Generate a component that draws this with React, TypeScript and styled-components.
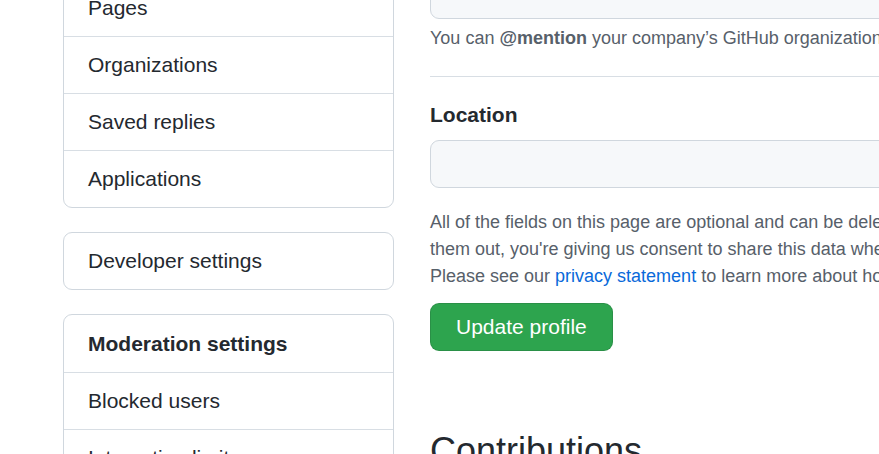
import React from "react";
import styled, { createGlobalStyle } from "styled-components";

const GlobalStyle = createGlobalStyle`
  html, body {
    margin: 0;
    padding: 0;
    background: #ffffff;
    overflow: hidden;
  }
  body {
    font-family: "Liberation Sans", Arial, Helvetica, sans-serif;
    color: #24292f;
  }
`;

const Layout = styled.div`
  display: flex;
  align-items: flex-start;
  gap: 36px;
  margin-top: -29px;
  padding-left: 63px;
  width: max-content;
`;

const Sidebar = styled.nav`
  width: 331px;
  flex-shrink: 0;
  display: flex;
  flex-direction: column;
  gap: 24px;
  padding-top: 8px;
`;

const MenuBox = styled.div`
  border: 1px solid #d0d7de;
  border-radius: 9px;
  overflow: hidden;
  background: #ffffff;
`;

const MenuItem = styled.div<{ $heading?: boolean }>`
  display: block;
  height: ${(p) => (p.$heading ? 57 : 56)}px;
  line-height: ${(p) => (p.$heading ? 57 : 56)}px;
  padding: 0 24px;
  font-size: 21px;
  font-weight: ${(p) => (p.$heading ? 700 : 400)};
  color: #24292f;
  white-space: nowrap;
  & + & {
    border-top: 1px solid #d8dee4;
  }
`;

const Main = styled.main`
  width: 900px;
  flex-shrink: 0;
  display: flex;
  flex-direction: column;
  align-items: flex-start;
`;

const TextInput = styled.div<{ $gap?: number }>`
  box-sizing: border-box;
  width: 100%;
  height: 48px;
  margin-top: ${(p) => p.$gap ?? 0}px;
  background: #f6f8fa;
  border: 1px solid #d0d7de;
  border-radius: 9px;
`;

const Note = styled.p`
  margin: 6px 0 0;
  font-size: 18px;
  line-height: 27px;
  color: #57606a;
  white-space: nowrap;
  strong {
    font-weight: 700;
  }
`;

const Divider = styled.hr`
  width: 100%;
  height: 0;
  border: 0;
  border-top: 1px solid #d8dee4;
  margin: 24px 0 22px;
`;

const Label = styled.label`
  display: block;
  font-size: 21px;
  line-height: 32px;
  font-weight: 700;
  color: #24292f;
`;

const Paragraph = styled.p`
  margin: 21px 0 0;
  font-size: 18px;
  line-height: 27px;
  color: #57606a;
  white-space: nowrap;
`;

const Link = styled.a`
  color: #0969da;
  text-decoration: none;
`;

const PrimaryButton = styled.button`
  margin-top: 13px;
  height: 48px;
  padding: 0 25px;
  background: #2da44e;
  color: #ffffff;
  border: 1px solid rgba(27, 31, 36, 0.15);
  border-radius: 9px;
  font-family: "Liberation Sans", Arial, Helvetica, sans-serif;
  font-size: 21px;
  line-height: 46px;
  cursor: pointer;
`;

const SectionHeading = styled.h2`
  margin: 73px 0 0;
  font-size: 36px;
  line-height: 54px;
  font-weight: 400;
  color: #24292f;
`;

export default function App() {
  return (
    <>
      <GlobalStyle />
      <Layout>
        <Sidebar>
          <MenuBox>
            <MenuItem>Pages</MenuItem>
            <MenuItem>Organizations</MenuItem>
            <MenuItem>Saved replies</MenuItem>
            <MenuItem>Applications</MenuItem>
          </MenuBox>
          <MenuBox>
            <MenuItem>Developer settings</MenuItem>
          </MenuBox>
          <MenuBox>
            <MenuItem $heading>Moderation settings</MenuItem>
            <MenuItem>Blocked users</MenuItem>
            <MenuItem>Interaction limits</MenuItem>
          </MenuBox>
        </Sidebar>
        <Main>
          <TextInput />
          <Note>
            You can <strong>@mention</strong> your company’s GitHub organization to link it.
          </Note>
          <Divider />
          <Label>Location</Label>
          <TextInput $gap={9} />
          <Paragraph>
            All of the fields on this page are optional and can be deleted at any time, and by filling
            <br />
            them out, you're giving us consent to share this data wherever your user profile appears.
            <br />
            Please see our <Link href="#">privacy statement</Link> to learn more about how we use this information.
          </Paragraph>
          <PrimaryButton type="button">Update profile</PrimaryButton>
          <SectionHeading>Contributions</SectionHeading>
        </Main>
      </Layout>
    </>
  );
}
